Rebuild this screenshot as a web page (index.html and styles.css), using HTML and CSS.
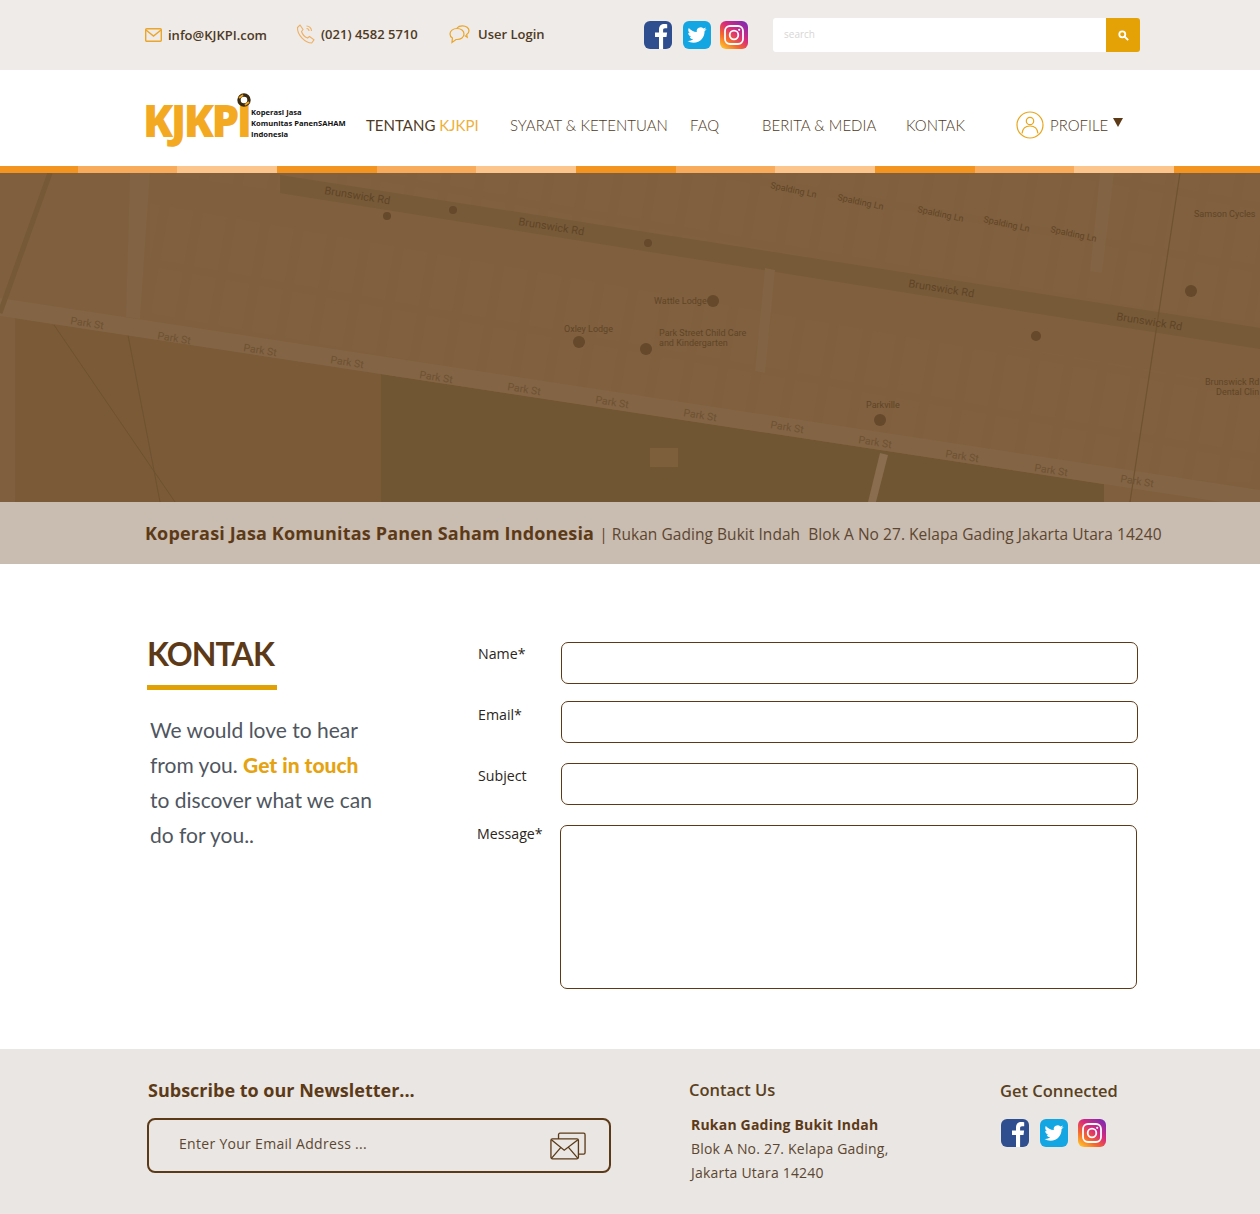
FILE: index.html
```html
<!DOCTYPE html>
<html lang="en">
<head>
    <meta charset="UTF-8">
    <meta name="viewport" content="width=device-width, initial-scale=1.0">
    <title>KJKPI - Kontak</title>
    <link rel="stylesheet" href="styles.css">
</head>
<body>
    <svg class="icon-defs" aria-hidden="true">
        <defs>
            <linearGradient id="igGrad" x1="0.1" y1="1" x2="0.9" y2="0">
                <stop offset="0" stop-color="#fdc62e"/>
                <stop offset="0.3" stop-color="#f5682c"/>
                <stop offset="0.6" stop-color="#d62a7e"/>
                <stop offset="1" stop-color="#7a2bb5"/>
            </linearGradient>
            <symbol id="fb" viewBox="0 0 28 28">
                <rect width="28" height="28" rx="6" fill="#2f4e8f"/>
                <path d="M15 28V16h-4v-4.600h4V8.500C15 4.800 17.200 3 20.300 3c1.400 0 2.500.1 2.900.2v4h-2.100c-1.600 0-2 .8-2 2v2.200h4l-.6 4.600h-3.400v12z" fill="#fff"/>
            </symbol>
            <symbol id="tw" viewBox="0 0 28 28">
                <rect width="28" height="28" rx="6" fill="#14a5e3"/>
                <g transform="translate(4.500 4.500) scale(.79)">
                    <path d="M23.953 4.570a10 10 0 01-2.825.775 4.958 4.958 0 002.163-2.723c-.951.555-2.005.959-3.127 1.184a4.920 4.920 0 00-8.384 4.482C7.690 8.095 4.067 6.130 1.640 3.162a4.822 4.822 0 00-.666 2.475c0 1.710.870 3.213 2.188 4.096a4.904 4.904 0 01-2.228-.616v.060a4.923 4.923 0 003.946 4.827 4.996 4.996 0 01-2.212.085 4.936 4.936 0 004.604 3.417 9.867 9.867 0 01-6.102 2.105c-.390 0-.779-.023-1.170-.067a13.995 13.995 0 007.557 2.209c9.053 0 13.998-7.496 13.998-13.985 0-.210 0-.420-.015-.630A9.935 9.935 0 0024 4.590z" fill="#fff"/>
                </g>
            </symbol>
            <symbol id="ig" viewBox="0 0 28 28">
                <rect width="28" height="28" rx="6" fill="url(#igGrad)"/>
                <rect x="5" y="5" width="18" height="18" rx="5" fill="none" stroke="#fff" stroke-width="1.800"/>
                <circle cx="14" cy="14" r="4.300" fill="none" stroke="#fff" stroke-width="1.800"/>
                <circle cx="19.200" cy="8.800" r="1.100" fill="#fff"/>
            </symbol>
        </defs>
    </svg>

    <div class="topbar">
        <div class="wrap topbar-inner">
            <a class="top-link link-mail">
                <svg class="top-icon" width="17" height="14" viewBox="0 0 17 14" fill="none" stroke="#eba52b" stroke-width="1.400"><rect x=".7" y=".7" width="15.600" height="12.600" rx="1"/><path d="M1 2l7.500 6L16 2"/></svg>
                <span>info@KJKPI.com</span>
            </a>
            <a class="top-link link-phone">
                <svg class="top-icon" width="20" height="20" viewBox="0 0 20 20" fill="none" stroke="#eeb064" stroke-width="1.100"><path d="M1.500 3.500L4 1l3 4.500-1.500 2c.8 2.500 3.500 5.500 6 6.500l2-1.500 4.500 3.300-2.300 3.200C9.500 19 1 11 1.500 3.500z"/><path d="M10.500 2a5 5 0 0 1 5 5M10.500 4.500a2.500 2.500 0 0 1 2.500 2.500"/></svg>
                <span>(021) 4582 5710</span>
            </a>
            <a class="top-link link-login">
                <svg class="top-icon" width="21" height="19" viewBox="0 0 21 19" fill="none" stroke="#eba52b" stroke-width="1.200"><path d="M8 3.500C4 3.500 1 6 1 9c0 1.700 1 3.100 2.400 4l-.4 4.500 4-3h1c4 0 7-2.300 7-5.500s-3-5.500-7-5.500z"/><path d="M8 3c1-1.300 3-2.200 5.500-2.200 3.600 0 6.500 2.200 6.500 5 0 1.600-.9 2.900-2.300 3.800l.5 2.700-2.500-1.700"/></svg>
                <span>User Login</span>
            </a>
            <div class="social social-top">
                <svg class="social-icon"><use href="#fb"/></svg>
                <svg class="social-icon"><use href="#tw"/></svg>
                <svg class="social-icon"><use href="#ig"/></svg>
            </div>
            <div class="search">
                <input class="search-input" type="text" placeholder="search">
                <button class="search-btn" aria-label="search">
                    <svg width="11" height="11" viewBox="0 0 11 11" fill="none" stroke="#fff" stroke-width="1.800"><circle cx="4.300" cy="4.300" r="3"/><path d="M6.500 6.500l3.700 3.700"/></svg>
                </button>
            </div>
        </div>
    </div>

    <header class="navbar">
        <div class="wrap navbar-inner">
            <div class="logo">
                <span class="logo-word">KJKPI</span>
                <svg class="logo-mark" width="14" height="14" viewBox="0 0 14 14"><circle cx="7" cy="7" r="5" fill="none" stroke="#3a2a12" stroke-width="3.400"/><path d="M2 5l4-3M12 9l-4 3" stroke="#f0a51f" stroke-width="2"/></svg>
                <span class="logo-text">Koperasi Jasa<br>Komunitas PanenSAHAM<br>Indonesia</span>
            </div>
            <nav class="menu">
                <a class="menu-item item-about">TENTANG <span class="accent">KJKPI</span></a>
                <a class="menu-item item-terms">SYARAT &amp; KETENTUAN</a>
                <a class="menu-item item-faq">FAQ</a>
                <a class="menu-item item-news">BERITA &amp; MEDIA</a>
                <a class="menu-item item-contact">KONTAK</a>
                <a class="menu-item item-profile">
                    <svg width="28" height="28" viewBox="0 0 28 28" fill="none" stroke="#e8a61c" stroke-width="1.200"><circle cx="14" cy="14" r="13"/><circle cx="14" cy="10" r="3.700"/><path d="M6 22.500c.5-5 3.500-7.500 8-7.500s7.500 2.500 8 7.500"/></svg>
                    <span>PROFILE</span>
                    <i class="caret"></i>
                </a>
            </nav>
        </div>
    </header>
    <div class="stripe"></div>

    <div class="map">
        <svg width="1260" height="329" viewBox="0 0 1260 329">
            <defs>
                <pattern id="blocks" width="34" height="62" patternUnits="userSpaceOnUse" patternTransform="rotate(10)">
                    <rect x="3" y="4" width="24" height="54" fill="#846546"/>
                </pattern>
            </defs>
            <rect width="1260" height="329" fill="#7f5f3d"/>
            <!-- blocks -->
            <polygon points="150,0 1260,0 1260,150 150,0" fill="url(#blocks)" opacity=".22"/>
            <polygon points="150,30 1260,215 1260,310 1040,300 150,140" fill="url(#blocks)" opacity=".2"/>
            <!-- park areas -->
            <polygon points="15,145 381,201 381,329 15,329" fill="#7a5a37"/>
            <polygon points="381,201 1104,311 1104,329 381,329" fill="#705632"/>
            <path d="M54 152L175 329M128 162L160 329" stroke="#6f5230" fill="none"/>
            <rect x="650" y="275" width="28" height="19" fill="#7d5f3c"/>
            <!-- roads -->
            <polygon points="280,2 1260,155 1260,176 280,20" fill="#775a38"/>
            <polygon points="0,125 1260,317 1260,335 0,143" fill="#836444"/>
            <polygon points="130,0 150,0 140,146 126,144" fill="#826343"/>
            <polygon points="880,280 888,282 876,329 868,329" fill="#8a6c4e"/>
            <polygon points="765,95 775,97 765,200 755,198" fill="#826343"/>
            <polygon points="1100,0 1114,0 1102,100 1090,98" fill="#826343"/>
            <path d="M1180 0L1130 329" stroke="#6f5230" stroke-width="1.200" fill="none"/>
            <path d="M50 0L0 140" stroke="#765936" stroke-width="5" fill="none"/>
            <!-- labels -->
            <g class="map-label map-label-road">
                <text transform="translate(324 21) rotate(9)">Brunswick Rd</text>
                <text transform="translate(518 52) rotate(9)">Brunswick Rd</text>
                <text transform="translate(908 114) rotate(9)">Brunswick Rd</text>
                <text transform="translate(1116 147) rotate(9)">Brunswick Rd</text>
            </g>
            <g class="map-label">
                <text transform="translate(770 15) rotate(12)">Spalding Ln</text>
                <text transform="translate(837 27) rotate(12)">Spalding Ln</text>
                <text transform="translate(917 39) rotate(12)">Spalding Ln</text>
                <text transform="translate(983 49) rotate(12)">Spalding Ln</text>
                <text transform="translate(1050 59) rotate(12)">Spalding Ln</text>
                <text x="654" y="131">Wattle Lodge</text>
                <text x="564" y="159">Oxley Lodge</text>
                <text x="659" y="163">Park Street Child Care</text>
                <text x="659" y="173">and Kindergarten</text>
                <text x="866" y="235">Parkville</text>
                <text x="1194" y="44">Samson Cycles</text>
                <text x="1205" y="212">Brunswick Rd</text>
                <text x="1216" y="222">Dental Clin</text>
            </g>
            <g class="map-label map-label-faint">
                <text transform="translate(70 151) rotate(9)">Park St</text>
                <text transform="translate(157 166) rotate(9)">Park St</text>
                <text transform="translate(243 178) rotate(9)">Park St</text>
                <text transform="translate(330 190) rotate(9)">Park St</text>
                <text transform="translate(419 205) rotate(9)">Park St</text>
                <text transform="translate(507 217) rotate(9)">Park St</text>
                <text transform="translate(595 230) rotate(9)">Park St</text>
                <text transform="translate(683 243) rotate(9)">Park St</text>
                <text transform="translate(770 255) rotate(9)">Park St</text>
                <text transform="translate(858 270) rotate(9)">Park St</text>
                <text transform="translate(945 284) rotate(9)">Park St</text>
                <text transform="translate(1034 298) rotate(9)">Park St</text>
                <text transform="translate(1120 309) rotate(9)">Park St</text>
            </g>
            <g fill="#65492a">
                <circle cx="713" cy="128" r="6"/>
                <circle cx="579" cy="169" r="6"/>
                <circle cx="646" cy="176" r="6"/>
                <circle cx="880" cy="247" r="6"/>
                <circle cx="1191" cy="118" r="6"/>
                <circle cx="1036" cy="163" r="5"/>
                <circle cx="648" cy="70" r="4"/>
                <circle cx="453" cy="37" r="4"/>
                <circle cx="387" cy="43" r="4"/>
            </g>
        </svg>
    </div>

    <div class="address-bar">
        <div class="wrap address-inner">
            <strong class="address-name">Koperasi Jasa Komunitas Panen Saham Indonesia</strong>
            <span class="address-line">| Rukan Gading Bukit Indah&nbsp; Blok A No 27. Kelapa Gading Jakarta Utara 14240</span>
        </div>
    </div>

    <main class="wrap contact">
        <section class="contact-intro">
            <h1 class="contact-title">KONTAK</h1>
            <p class="contact-text">We would love to hear<br>from you. <b class="touch">Get in touch</b><br>to discover what we can<br>do for you..</p>
        </section>
        <form class="contact-form">
            <div class="form-row row-name">
                <label class="form-label">Name*</label>
                <input class="form-input" type="text">
            </div>
            <div class="form-row row-email">
                <label class="form-label">Email*</label>
                <input class="form-input" type="text">
            </div>
            <div class="form-row row-subject">
                <label class="form-label">Subject</label>
                <input class="form-input" type="text">
            </div>
            <div class="form-row row-message">
                <label class="form-label">Message*</label>
                <textarea class="form-input form-area"></textarea>
            </div>
        </form>
    </main>

    <footer class="footer">
        <div class="wrap footer-inner">
            <div class="foot-news">
                <h3 class="foot-title">Subscribe to our Newsletter...</h3>
                <div class="news-box">
                    <input class="news-input" type="text" placeholder="Enter Your Email Address ...">
                    <svg width="36" height="28" viewBox="0 0 38 29" fill="none" stroke="#5d3a17" stroke-width="1.400"><path d="M9 7V2.500C9 1.700 9.700 1 10.500 1h25c.8 0 1.500.7 1.500 1.500v19c0 .8-.7 1.500-1.500 1.500H30"/><rect x="1" y="7" width="29" height="21" rx="1.500"/><path d="M1.500 8l13.500 11L29.500 8M1.500 27.500l10-11.500M29.500 27.500l-10-11.500"/></svg>
                </div>
            </div>
            <div class="foot-contact">
                <h3 class="foot-head">Contact Us</h3>
                <p class="foot-address"><b>Rukan Gading Bukit Indah</b><br>Blok A No. 27. Kelapa Gading,<br>Jakarta Utara 14240</p>
            </div>
            <div class="foot-social">
                <h3 class="foot-head">Get Connected</h3>
                <div class="social social-foot">
                    <svg class="social-icon"><use href="#fb"/></svg>
                    <svg class="social-icon"><use href="#tw"/></svg>
                    <svg class="social-icon"><use href="#ig"/></svg>
                </div>
            </div>
        </div>
    </footer>
</body>
</html>
```

FILE: styles.css
```css
* {
    box-sizing: border-box;
}
body {
    margin: 0;
    font-family: "Open Sans", sans-serif;
    color: #5d3a17;
    background-color: #fff;
}
.icon-defs {
    position: absolute;
    width: 0;
    height: 0;
}
.wrap {
    width: 995px;
    margin-left: 145px;
}

/* top bar */
.topbar {
    height: 70px;
    background-color: #eeebe8;
}
.topbar-inner {
    display: flex;
    align-items: center;
    height: 70px;
}
.top-link {
    display: flex;
    align-items: center;
    margin-top: -2px;
    font-size: 13px;
    font-weight: 600;
    color: #4f3a24;
    white-space: nowrap;
}
.top-icon {
    flex: none;
}
.link-mail {
    width: 151px;
    gap: 6px;
    padding-top: 1px;
}
.link-phone {
    width: 153px;
    gap: 5px;
}
.link-login {
    width: 195px;
    gap: 8px;
}
.social {
    display: flex;
}
.social-icon {
    display: block;
    width: 28px;
    height: 28px;
}
.social-top .social-icon:nth-child(2),
.social-foot .social-icon:nth-child(2) {
    margin-left: 11px;
    margin-right: 9px;
}
.search {
    display: flex;
    width: 367px;
    height: 34px;
    margin-left: 25px;
}
.search-input {
    flex: 1;
    min-width: 0;
    border: 0;
    padding: 0 0 2px 11px;
    font-family: inherit;
    font-size: 10px;
    background-color: #fff;
    border-radius: 3px 0 0 3px;
}
.search-input::placeholder {
    color: #d8d6d4;
}
.search-btn {
    display: flex;
    align-items: center;
    justify-content: center;
    width: 34px;
    padding: 0;
    border: 0;
    background-color: #e5a206;
    border-radius: 0 3px 3px 0;
}

/* nav */
.navbar {
    height: 96px;
}
.navbar-inner {
    display: flex;
    height: 96px;
    width: 1000px;
}
.logo {
    position: relative;
    width: 221px;
    flex: none;
}
.logo-word {
    position: absolute;
    left: -2px;
    top: 20px;
    font-family: "Open Sans", sans-serif;
    font-size: 44px;
    line-height: 60px;
    font-weight: 800;
    letter-spacing: -2.500px;
    color: #f4a923;
}
.logo-mark {
    position: absolute;
    left: 92px;
    top: 23px;
}
.logo-text {
    position: absolute;
    left: 106px;
    top: 37px;
    font-size: 7.600px;
    line-height: 11px;
    font-weight: 700;
    color: #111;
    white-space: nowrap;
}
.menu {
    display: flex;
    align-items: center;
    font-family: Lato, sans-serif;
    font-size: 15px;
    font-weight: 300;
    color: #4f3a24;
    height: 110px;
}
.menu-item {
    flex: none;
    white-space: nowrap;
}
.item-about {
    width: 144px;
    font-weight: 400;
}
.accent {
    color: #eeb03c;
}
.item-terms {
    width: 180px;
}
.item-faq {
    width: 72px;
}
.item-news {
    width: 144px;
}
.item-contact {
    width: 110px;
}
.item-profile {
    display: flex;
    align-items: center;
    gap: 6px;
}
.caret {
    width: 0;
    height: 0;
    margin-left: -1px;
    margin-top: -5px;
    border-left: 5px solid transparent;
    border-right: 5px solid transparent;
    border-top: 9px solid #5d3a17;
}
.stripe {
    height: 7px;
    background: linear-gradient(90deg, #f39320 33.33%, #f9ab5c 33.33% 66.66%, #fcc58c 66.66%) -22px 0 / 299px 7px;
}

/* map */
.map {
    height: 329px;
    overflow: hidden;
}
.map svg {
    display: block;
}
.map-label text {
    font-family: Roboto, sans-serif;
    font-size: 9px;
    fill: #5f4526;
}
.map-label-road text {
    font-size: 11px;
}
.map-label-faint text {
    fill: #6d5232;
    font-size: 10.500px;
}

/* address */
.address-bar {
    height: 62px;
    background-color: #c9bcb0;
}
.address-inner {
    display: flex;
    align-items: center;
    gap: 5px;
    height: 62px;
    white-space: nowrap;
}
.address-name {
    font-size: 18px;
    font-weight: 700;
    letter-spacing: .16px;
    color: #5d3a17;
}
.address-line {
    font-size: 15.500px;
    letter-spacing: .05px;
    color: #5d4630;
    padding-top: 2px;
}

/* contact */
.contact {
    display: flex;
    height: 485px;
}
.contact-intro {
    width: 332px;
    flex: none;
    padding-top: 70px;
}
.contact-title {
    width: 130px;
    margin: 0 0 0 2px;
    height: 56px;
    border-bottom: 5px solid #e0a106;
    font-family: Lato, sans-serif;
    font-size: 32px;
    line-height: 40px;
    font-weight: 700;
    letter-spacing: -.9px;
    color: #5d3a17;
}
.contact-text {
    margin: 22px 0 0 5px;
    font-family: Lato, sans-serif;
    font-size: 21px;
    line-height: 35px;
    color: #4f5660;
}
.touch {
    font-weight: 900;
    color: #e5a312;
}
.contact-form {
    flex: 1;
    padding-top: 78px;
}
.form-row {
    display: flex;
    margin-left: 1px;
}
.row-email {
    margin-top: 17px;
}
.row-subject {
    margin-top: 20px;
}
.row-message {
    margin-top: 20px;
}
.form-label {
    width: 83px;
    flex: none;
    padding-top: 2px;
    font-size: 14.200px;
    line-height: 19px;
    color: #2b2620;
}
.row-email .form-label {
    padding-top: 4px;
}
.row-subject .form-label {
    padding-top: 3px;
}
.row-message .form-label {
    margin-left: -1px;
    margin-top: -1px;
    padding-top: 0;
}
.form-input {
    display: block;
    width: 577px;
    height: 42px;
    border: 1px solid #5d3a17;
    border-radius: 7px;
    background-color: #fff;
    resize: none;
}
.form-area {
    height: 164px;
}

/* footer */
.footer {
    height: 165px;
    background-color: #e9e6e3;
}
.footer-inner {
    display: grid;
    grid-template-columns: 544px 311px 140px;
    padding-top: 30px;
}
.foot-news {
    padding-left: 2px;
}
.foot-title {
    margin: -1px 0 16px 1px;
    font-size: 18px;
    line-height: 24px;
    font-weight: 700;
    color: #5d3a17;
}
.news-box {
    display: flex;
    align-items: center;
    width: 464px;
    height: 55px;
    padding: 0 23px 0 30px;
    border: 2px solid #5d3a17;
    border-radius: 8px;
}
.news-input {
    flex: 1;
    min-width: 0;
    border: 0;
    padding: 0 0 4px;
    font-family: inherit;
    font-size: 14px;
    letter-spacing: .3px;
    background: transparent;
}
.news-input::placeholder {
    color: #5d4630;
    opacity: 1;
}
.foot-head {
    margin: 0;
    font-size: 16.500px;
    line-height: 22px;
    font-weight: 600;
    color: #5a4020;
}
.foot-address {
    margin: 12px 0 0 2px;
    font-size: 14px;
    line-height: 24px;
    letter-spacing: .2px;
    color: #5d4630;
}
.foot-address b {
    color: #5d3a17;
}
.foot-social {
    padding-top: 1px;
}
.social-foot {
    margin: 17px 0 0 1px;
}
.social-foot .social-icon:nth-child(2) {
    margin-right: 10px;
}
```
